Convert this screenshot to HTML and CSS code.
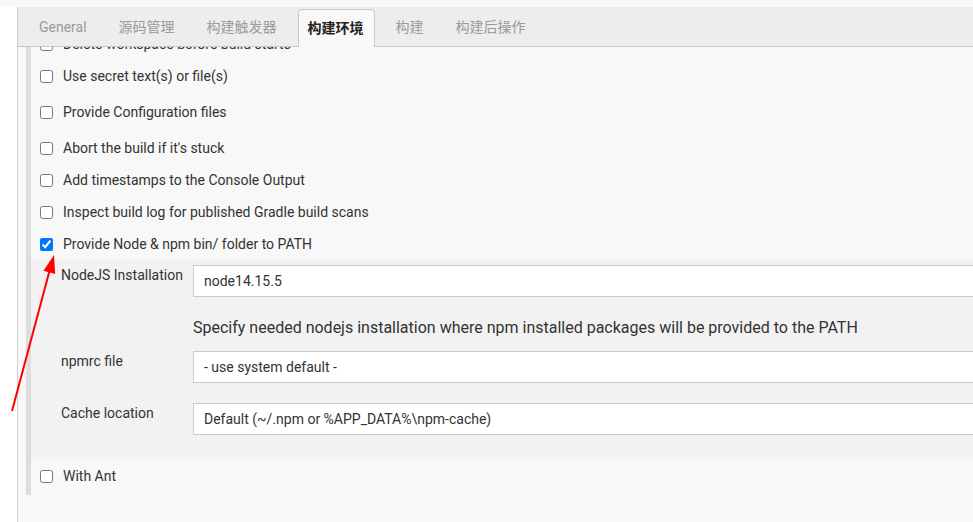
FILE: index.html
```html
<!DOCTYPE html>
<html>
<head>
<meta charset="utf-8">
<link rel="stylesheet" href="styles.css">
</head>
<body>
<div class="topstrip"></div>
<div class="main">
  <div class="gutter"></div>
  <div class="panel">
    <div class="tabs">
      <div class="tab">General</div>
      <div class="tab">源码管理</div>
      <div class="tab">构建触发器</div>
      <div class="tab active">构建环境</div>
      <div class="tab">构建</div>
      <div class="tab">构建后操作</div>
    </div>
    <div class="section">
      <label class="row"><input type="checkbox"><span>Delete workspace before build starts</span></label>
      <label class="row gap"><input type="checkbox"><span>Use secret text(s) or file(s)</span></label>
      <label class="row gap"><input type="checkbox"><span>Provide Configuration files</span></label>
      <label class="row"><input type="checkbox"><span>Abort the build if it's stuck</span></label>
      <label class="row"><input type="checkbox"><span>Add timestamps to the Console Output</span></label>
      <label class="row"><input type="checkbox"><span>Inspect build log for published Gradle build scans</span></label>
      <label class="row"><input type="checkbox" checked><span>Provide Node &amp; npm bin/ folder to PATH</span></label>
      <div class="nested">
        <div class="field">
          <div class="flabel">NodeJS Installation</div>
          <div class="finput">node14.15.5</div>
        </div>
        <div class="desc">Specify needed nodejs installation where npm installed packages will be provided to the PATH</div>
        <div class="field f2">
          <div class="flabel">npmrc file</div>
          <div class="finput">- use system default -</div>
        </div>
        <div class="field f3">
          <div class="flabel">Cache location</div>
          <div class="finput">Default (~/.npm or %APP_DATA%\npm-cache)</div>
        </div>
      </div>
      <label class="row last"><input type="checkbox"><span>With Ant</span></label>
    </div>
  </div>
</div>
<svg class="arrow" width="973" height="522" viewBox="0 0 973 522">
  <line x1="12" y1="411" x2="50" y2="269" stroke="#ff0000" stroke-width="2"/>
  <polygon points="54,255 43.5,270.8 55.1,274" fill="#ff0000"/>
</svg>
</body>
</html>
```
FILE: styles.css
```css
html, body {
  margin: 0;
  padding: 0;
  height: 100%;
  overflow: hidden;
}
body {
  background: #ffffff;
  font-family: Roboto, "Noto Sans CJK SC", sans-serif;
  font-size: 14px;
  color: #333333;
  position: relative;
}
.topstrip {
  height: 7px;
  background: #f8f8f8;
}
.main {
  display: flex;
  height: 515px;
}
.gutter {
  width: 17px;
  flex: none;
}
.panel {
  flex: 1;
  border-left: 1px solid #cfcfcf;
  background: #f8f8f8;
  overflow: hidden;
}
.tabs {
  position: relative;
  z-index: 1;
  display: flex;
  align-items: flex-end;
  gap: 10px;
  height: 39px;
  padding-left: 10px;
  background: #ededed;
  border-bottom: 1px solid #c8c8c8;
}
.tab {
  height: 37px;
  line-height: 37px;
  padding: 0 11px;
  color: #9a9a9a;
  font-size: 14px;
  white-space: nowrap;
}
.tab.active {
  box-sizing: border-box;
  height: 38px;
  margin-bottom: -1px;
  padding: 0 10px 0 9px;
  line-height: 36px;
  background: #f8f8f8;
  border: 1px solid #c8c8c8;
  border-bottom: none;
  border-radius: 4px 4px 0 0;
  color: #222222;
  font-weight: bold;
}
.section {
  margin-left: 8px;
  margin-top: -19px;
  border-left: 5px solid #dddddd;
  padding-bottom: 3px;
}
.row {
  display: flex;
  align-items: center;
  height: 32px;
  padding-left: 9px;
}
.row.gap {
  margin-bottom: 4px;
}
.row.last {
  margin-top: 1px;
}
.row input {
  margin: 0 10px 0 0;
  width: 13px;
  height: 13px;
  flex: none;
}
.nested {
  background: #f2f2f2;
  padding: 5px 0 24px 30px;
}
.field {
  display: flex;
  margin-right: -20px;
}
.flabel {
  width: 132px;
  flex: none;
  line-height: 20px;
}
.finput {
  flex: 1;
  box-sizing: border-box;
  height: 32px;
  line-height: 30px;
  padding-left: 10px;
  background: #ffffff;
  border: 1px solid #cccccc;
  white-space: nowrap;
}
.desc {
  margin: 21px 0 13px 132px;
  font-size: 16px;
  line-height: 20px;
  white-space: nowrap;
}
.f3 {
  margin-top: 20px;
}
.arrow {
  position: absolute;
  left: 0;
  top: 0;
  pointer-events: none;
}
```
